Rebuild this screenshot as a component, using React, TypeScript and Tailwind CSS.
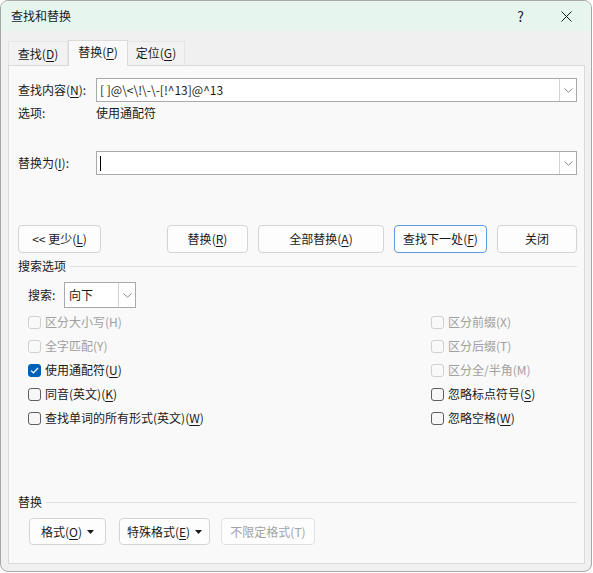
import type { ReactNode } from 'react'

const FONT = '"Noto Sans CJK SC", "Noto Sans", sans-serif'

// underlined access key, e.g. 查找(D)
function Key({ label, k }: { label: string; k: string }) {
  return (
    <>
      {label}(<span className="underline underline-offset-[2px]">{k}</span>)
    </>
  )
}

function Chevron() {
  return (
    <svg width="9" height="5" viewBox="0 0 9 5" fill="none">
      <path d="M0.5 0.5 L4.5 4.2 L8.5 0.5" stroke="#8a8a8a" strokeWidth="1" />
    </svg>
  )
}

function Combo({ value, caret }: { value?: string; caret?: boolean }) {
  return (
    <div className="flex-1 h-[24px] flex border border-[#a9a9a9] bg-white">
      <div className="flex-1 flex items-center pl-[3px] text-[12px] text-[#1a1a1a]">
        {caret && <span className="w-px h-[15px] bg-black" />}
        {value}
      </div>
      <div className="w-[17px] flex items-center justify-center border-l border-[#d2d2d2]">
        <Chevron />
      </div>
    </div>
  )
}

function Button({
  children,
  w,
  focused,
  disabled,
  className = '',
}: {
  children: ReactNode
  w: string
  focused?: boolean
  disabled?: boolean
  className?: string
}) {
  return (
    <div
      className={`${w} ${className} flex items-center justify-center rounded-[4px] border text-[12px] ${
        focused ? 'border-[#5a9ce2] bg-[#fdfdfd]' : 'border-[#d4d4d4] bg-[#fdfdfd]'
      } ${disabled ? 'text-[#a3a3a3] bg-[#f9f9f9] border-[#e0e0e0]' : 'text-[#1a1a1a]'}`}
    >
      {children}
    </div>
  )
}

function Caret() {
  return (
    <svg width="7" height="4" viewBox="0 0 7 4" className="ml-[5px]">
      <path d="M0 0 H7 L3.5 4 Z" fill="#1a1a1a" />
    </svg>
  )
}

function Check({
  children,
  checked,
  disabled,
}: {
  children: ReactNode
  checked?: boolean
  disabled?: boolean
}) {
  return (
    <div className="h-[24px] flex items-center">
      <span
        className={`w-[13px] h-[13px] rounded-[3px] border flex items-center justify-center ${
          checked
            ? 'bg-[#005fb8] border-[#005fb8]'
            : disabled
            ? 'border-[#d0d0d0] bg-[#f9f9f9]'
            : 'border-[#5f5f5f] bg-[#f6f6f6]'
        }`}
      >
        {checked && (
          <svg width="9" height="7" viewBox="0 0 9 7" fill="none">
            <path d="M1 3.6 L3.4 5.8 L8 1" stroke="white" strokeWidth="1.2" />
          </svg>
        )}
      </span>
      <span className={`ml-[4px] text-[12px] ${disabled ? 'text-[#a0a0a0]' : 'text-[#1a1a1a]'}`}>
        {children}
      </span>
    </div>
  )
}

function Group({ title, className = '' }: { title: string; className?: string }) {
  return (
    <div className={`h-[16px] flex items-center ${className}`}>
      <span className="text-[12px] text-[#1a1a1a]">{title}</span>
      <span className="flex-1 h-px bg-[#e2e2e2] ml-[4px]" />
    </div>
  )
}

export default function App() {
  return (
    <div className="w-[593px] h-[573px] bg-white leading-[16px]" style={{ fontFamily: FONT }}>
      <div className="w-[592px] h-[572px] flex flex-col rounded-[8px] border border-[#a8a8a8] overflow-hidden bg-[#f0f0f0]">
        {/* title bar */}
        <div className="h-[30px] flex items-center bg-[#e6f6ef] pl-[10px]">
          <span className="text-[12px] text-[#1a1a1a]">查找和替换</span>
          <span className="ml-auto text-[14px] text-[#1a1a1a] mr-[37px]">?</span>
          <svg width="11" height="11" viewBox="0 0 11 11" className="mr-[19px]">
            <path d="M0.5 0.5 L10.5 10.5 M10.5 0.5 L0.5 10.5" stroke="#1a1a1a" strokeWidth="1" />
          </svg>
        </div>

        <div className="flex-1 flex flex-col pt-[8px] pl-[7px] pr-[6px] pb-[7px]">
          {/* tabs */}
          <div className="h-[26px] flex items-end text-[12px] text-[#1a1a1a]">
            <div className="w-[60px] h-[24px] flex items-center justify-center border border-b-0 border-[#e4e4e4] bg-[#f2f2f2]">
              <Key label="查找" k="D" />
            </div>
            <div className="w-[60px] h-[26px] flex items-center justify-center border border-b-0 border-[#dadada] bg-[#f9f9f9] relative z-10 -mb-px pb-[3px]">
              <Key label="替换" k="P" />
            </div>
            <div className="w-[57px] h-[24px] flex items-center justify-center border border-b-0 border-l-0 border-[#e4e4e4] bg-[#f2f2f2] pb-px">
              <Key label="定位" k="G" />
            </div>
          </div>

          {/* panel */}
          <div className="flex-1 flex flex-col border border-[#dadada] bg-[#f9f9f9] pt-[12px] pl-[9px] pr-[7px] text-[12px] text-[#1a1a1a]">
            <div className="flex items-center">
              <span className="w-[78px]">
                <Key label="查找内容" k="N" />:
              </span>
              <Combo value="[ ]@\<\!\-\-[!^13]@^13" />
            </div>
            <div className="flex items-center h-[18px] mt-[2px]">
              <span className="w-[78px]">选项:</span>
              <span>使用通配符</span>
            </div>
            <div className="flex items-center mt-[29px]">
              <span className="w-[78px]">
                <Key label="替换为" k="I" />:
              </span>
              <Combo caret />
            </div>

            {/* action buttons */}
            <div className="flex h-[28px] mt-[50px]">
              <Button w="w-[83px]">
                {'<< '}
                <Key label="更少" k="L" />
              </Button>
              <div className="ml-auto flex gap-[10px]">
                <Button w="w-[81px]">
                  <Key label="替换" k="R" />
                </Button>
                <Button w="w-[126px]">
                  <Key label="全部替换" k="A" />
                </Button>
                <Button w="w-[93px]" focused>
                  <Key label="查找下一处" k="F" />
                </Button>
                <Button w="w-[80px]">关闭</Button>
              </div>
            </div>

            <Group title="搜索选项" className="mt-[5px]" />

            <div className="flex items-center mt-[8px] pl-[10px]">
              <span className="w-[36px]">搜索:</span>
              <div className="w-[72px] h-[26px] flex border border-[#a9a9a9] bg-white">
                <span className="flex-1 flex items-center pl-[4px]">向下</span>
                <span className="w-[17px] flex items-center justify-center border-l border-[#d2d2d2]">
                  <Chevron />
                </span>
              </div>
            </div>

            {/* options */}
            <div className="flex mt-[2px]">
              <div className="flex-1 flex flex-col pl-[10px]">
                <Check disabled>区分大小写(H)</Check>
                <Check disabled>全字匹配(Y)</Check>
                <Check checked>
                  <Key label="使用通配符" k="U" />
                </Check>
                <Check>
                  <Key label="同音(英文)" k="K" />
                </Check>
                <Check>
                  <Key label="查找单词的所有形式(英文)" k="W" />
                </Check>
              </div>
              <div className="w-[146px] flex flex-col">
                <Check disabled>区分前缀(X)</Check>
                <Check disabled>区分后缀(T)</Check>
                <Check disabled>区分全/半角(M)</Check>
                <Check>
                  <Key label="忽略标点符号" k="S" />
                </Check>
                <Check>
                  <Key label="忽略空格" k="W" />
                </Check>
              </div>
            </div>

            <Group title="替换" className="mt-[64px]" />

            <div className="flex h-[27px] mt-[8px] pl-[11px]">
              <Button w="w-[77px]">
                <Key label="格式" k="O" />
                <Caret />
              </Button>
              <Button w="w-[91px]" className="ml-[13px]">
                <Key label="特殊格式" k="E" />
                <Caret />
              </Button>
              <Button w="w-[94px]" className="ml-[11px]" disabled>
                不限定格式(T)
              </Button>
            </div>
          </div>
        </div>
      </div>
    </div>
  )
}
